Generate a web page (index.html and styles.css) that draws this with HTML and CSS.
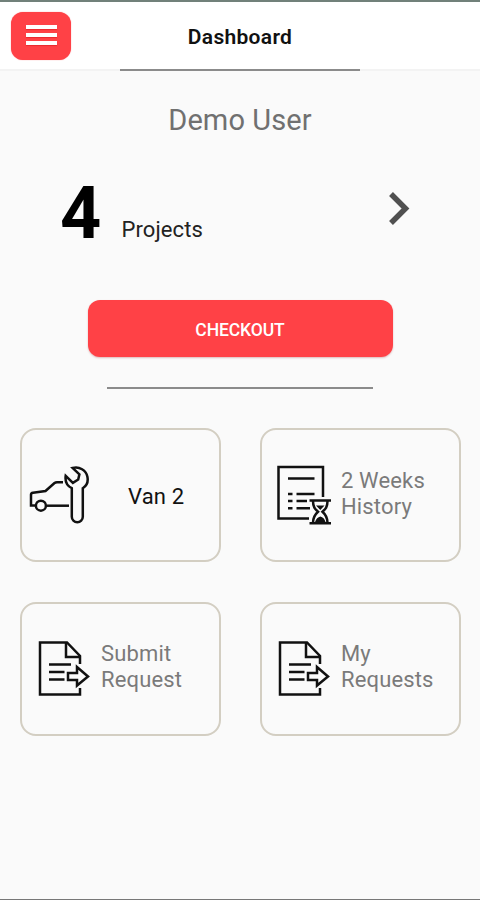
FILE: index.html
```html
<!DOCTYPE html>
<html lang="en">
<head>
<meta charset="utf-8">
<title>Dashboard</title>
<link rel="stylesheet" href="styles.css">
</head>
<body>
<svg class="defs" aria-hidden="true">
  <symbol id="request" viewBox="36 638 56 60">
    <path d="M81 664v-8L68 642.500H41v52H81v-6.500"/>
    <path d="M67 643v14h14"/>
    <path d="M50 664.500h22M50 672h15.500M50 679.500h15.500"/>
    <path d="M69 673h9v-6L89 676.500l-11 9v-5.500h-9z"/>
  </symbol>
</svg>
<div class="app">
  <header class="header">
    <button class="menu" aria-label="Menu"><span class="bar"></span><span class="bar"></span><span class="bar"></span></button>
    <h1 class="title">Dashboard</h1>
  </header>
  <div class="rule rule-top"></div>
  <main>
    <p class="user">Demo User</p>
    <section class="projects">
      <span class="count">4</span>
      <span class="projects-label">Projects</span>
      <svg class="chevron" viewBox="0 0 24 36"><path d="M4 4L18.500 18.500 4 33"/></svg>
    </section>
    <button class="checkout">CHECKOUT</button>
    <div class="rule rule-mid"></div>
    <section class="grid">
      <article class="card card-van">
        <svg class="icon icon-van" viewBox="28 464 64 60">
          <path d="M35.500 505.500H31V494.500q0-1.500 2-1.800L45.500 491l9-8q1-.7 2.500-.7h6"/>
          <circle cx="40.900" cy="505.700" r="5"/>
          <path d="M46.500 505.700H69"/>
          <path d="M71.800 488.200v28.500a5.500 5.500 0 0 0 11 0v-28.500c4-2.500 5.500-7 4.600-11.500-1.300-6.500-8-10.500-14.800-8.700l6.800 6.300-1.200 5.200-5.300 3.300-7.200-7c-.8 5.500 1.300 10 6.100 12.400z"/>
        </svg>
        <span class="label dark">Van 2</span>
      </article>
      <article class="card">
        <svg class="icon icon-history" viewBox="274 464 60 64">
          <path d="M323 498v-30h-44.500v51.500H309"/>
          <path d="M288 479.500h26.500M288 495h4.500M296.500 495H314.500M288 502h4.500M296.500 502H307M288 509.300h4.500M296.500 509.300H310"/>
          <path d="M309.500 501.500h21.500M309.500 524.300h21.500"/>
          <path d="M313 502c0 6 2 8 5 10.700-3 2.700-5 5-5 11M327.500 502c0 6-2 8-5 10.700 3 2.700 5 5 5 11"/>
          <path class="sand" d="M316 506.500h8.500l-4.200 4.500zM315 523c1-3 3-5 5.300-5.500 2.500.5 4.500 2.500 5.200 5.500z"/>
        </svg>
        <span class="label">2 Weeks<br>History</span>
      </article>
      <article class="card">
        <svg class="icon icon-request"><use href="#request"/></svg>
        <span class="label">Submit<br>Request</span>
      </article>
      <article class="card">
        <svg class="icon icon-request"><use href="#request"/></svg>
        <span class="label">My<br>Requests</span>
      </article>
    </section>
  </main>
</div>
</body>
</html>
```
FILE: styles.css
```css
* { box-sizing: border-box; }
body { margin: 0; background: #fafafa; font-family: Roboto, sans-serif; color: #111; }
h1, p { margin: 0; }
button { border: 0; padding: 0; font-family: inherit; }
.defs { display: none; }
.app { height: 900px; overflow: hidden; border-top: 2px solid #71817a; border-bottom: 1px solid #777; display: flex; flex-direction: column; }
.header { flex: none; height: 67px; background: #fff; display: grid; grid-template-columns: 71px 1fr 71px; align-items: start; padding-top: 10px; }
.menu { margin-left: 11px; width: 60px; height: 48px; border-radius: 12px; background: #ff4146; box-shadow: 0 0 1px #ff6669; display: flex; flex-direction: column; align-items: center; padding-top: 13px; gap: 4px; }
.bar { width: 31px; height: 4px; background: #fff; box-shadow: 0 1px 1px #e9292e; }
.title { text-align: center; font-size: 21px; line-height: 28px; font-weight: 600; letter-spacing: .3px; padding-top: 11px; }
.rule { flex: none; height: 2px; background: #8b8b8b; margin: 0 auto; }
.rule-top { width: 240px; box-shadow: -120px 0 0 #f3f3f3, 120px 0 0 #f3f3f3; }
.user { margin-top: 31px; text-align: center; font-size: 29px; line-height: 36px; letter-spacing: .1px; color: #707070; }
.projects { height: 100px; margin: 26px 69px 0 60px; display: flex; align-items: baseline; color: #000; }
.count { width: 61.500px; font-size: 72px; line-height: 100px; font-weight: 700; }
.projects-label { font-size: 22px; letter-spacing: .1px; color: #222; position: relative; top: -1px; }
.chevron { width: 24px; height: 36px; margin-left: auto; align-self: flex-start; margin-top: 26px; fill: none; stroke: #505050; stroke-width: 5.500; }
.checkout { display: block; width: 305px; height: 57px; margin: 36px auto 0; border-radius: 12px; background: #ff4146; box-shadow: 0 1px 2px #ddb9b9; color: #fff; font-size: 17.500px; line-height: 24px; padding-top: 2px; font-weight: 500; letter-spacing: -.1px; }
.rule-mid { width: 266px; margin-top: 30px; }
.grid { display: grid; grid-template-columns: 201px 201px; grid-auto-rows: 134px; gap: 39.500px 39px; margin: 39px 19px 0 20px; }
.card { border: 2px solid #d3cec2; border-radius: 16px; display: flex; align-items: center; padding-left: 13px; }
.card-van { padding-left: 6px; }
.icon { flex: none; fill: none; stroke: #111; stroke-width: 2.500; }
.icon-van { width: 64px; height: 60px; margin-bottom: 2px; }
.icon-history { width: 60px; height: 64px; margin-left: -1px; }
.icon-request { width: 56px; height: 60px; margin-bottom: 1px; }
.label { font-size: 22px; line-height: 26px; letter-spacing: .15px; color: #7a7a7a; margin-left: 10px; padding-bottom: 3px; }
.icon-history + .label { margin-left: 7px; }
.sand { fill: #111; stroke: none; }
.label.dark { color: #111; margin-left: 36px; padding: 3px 0 0; }
```
